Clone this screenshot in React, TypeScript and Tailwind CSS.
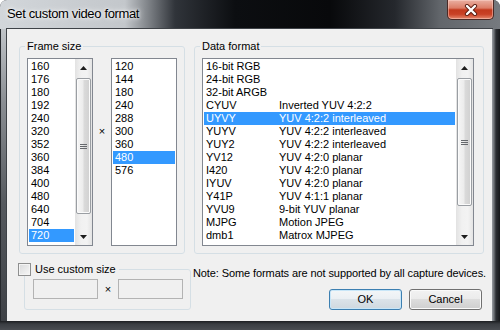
import React from 'react';

const widths = ['160', '176', '180', '192', '240', '320', '352', '360', '384', '400', '480', '640', '704', '720'];
const heights = ['120', '144', '180', '240', '288', '300', '360', '480', '576'];

const formats: [string, string][] = [
  ['16-bit RGB', ''],
  ['24-bit RGB', ''],
  ['32-bit ARGB', ''],
  ['CYUV', 'Inverted YUV 4:2:2'],
  ['UYVY', 'YUV 4:2:2 interleaved'],
  ['YUYV', 'YUV 4:2:2 interleaved'],
  ['YUY2', 'YUV 4:2:2 interleaved'],
  ['YV12', 'YUV 4:2:0 planar'],
  ['I420', 'YUV 4:2:0 planar'],
  ['IYUV', 'YUV 4:2:0 planar'],
  ['Y41P', 'YUV 4:1:1 planar'],
  ['YVU9', '9-bit YUV planar'],
  ['MJPG', 'Motion JPEG'],
  ['dmb1', 'Matrox MJPEG'],
];

const Arrow = ({ down }: { down?: boolean }) => (
  <div className="h-[17px] flex items-center justify-center">
    <svg width="7" height="4" viewBox="0 0 7 4">
      <polygon points={down ? '0,0 7,0 3.5,4' : '0,4 7,4 3.5,0'} fill="#1e1e1e" />
    </svg>
  </div>
);

const ScrollBar = ({ thumb }: { thumb: string }) => (
  <div className="w-[17px] h-full flex flex-col bg-[linear-gradient(to_right,#e2e2e2,#f1f1f1_35%,#f3f3f3_70%,#e4e4e4)]">
    <Arrow />
    <div className="flex-1 px-[1px] pt-[2px]">
      <div
        className={`${thumb} rounded-[2px] border border-[#9a9ea3] bg-[linear-gradient(to_right,#f6f6f6,#ececec_45%,#dadada_55%,#d0d0d0)] shadow-[inset_0_0_0_1px_#fbfbfb] flex flex-col items-center justify-center gap-[1px]`}
      >
        <div className="w-[7px] h-[1px] bg-[#66696d]" />
        <div className="w-[7px] h-[1px] bg-[#66696d]" />
        <div className="w-[7px] h-[1px] bg-[#66696d]" />
      </div>
    </div>
    <Arrow down />
  </div>
);

const Row = ({ selected, children }: { selected?: boolean; children: React.ReactNode }) => (
  <div className={`h-[13px] leading-[13px] pl-[2px] flex whitespace-nowrap ${selected ? 'bg-[#3399ff] text-white' : ''}`}>
    {children}
  </div>
);

const App = () => {
  return (
    <div className="w-[500px] h-[330px] bg-white overflow-hidden font-['Liberation_Sans',Arial,sans-serif] text-[11px] text-black">
      <div className="w-[500px] h-[330px] flex flex-col rounded-t-[7px] overflow-hidden bg-[#2d3035]">
        {/* Title bar */}
        <div className="h-[29px] flex items-start bg-[linear-gradient(to_right,#d2d6da_0px,#c3c7cb_125px,#30343a_175px,#0c0e11_235px,#08090b_330px,#25282d_395px,#62666b_440px,#767a7f_500px)]">
          <span className="pl-[7px] pt-[6px] text-[13px] leading-[16px] tracking-[-0.35px] [text-shadow:0_0_6px_#ffffff,0_0_3px_#ffffff]">
            Set custom video format
          </span>
          <div className="ml-auto mr-[6px] w-[47px] h-[20px] rounded-b-[5px] border border-t-0 border-[#4a2a26] bg-[linear-gradient(to_bottom,#eab0a2_0%,#dc7d67_42%,#c3391d_52%,#c94126_75%,#e5876c_100%)] shadow-[inset_0_0_0_1px_rgba(255,220,210,0.45)] flex items-center justify-center">
            <svg width="14" height="12" viewBox="0 0 14 12">
              <path d="M3 2 L11 10 M11 2 L3 10" stroke="#5b1c10" strokeWidth="4.2" strokeLinecap="round" />
              <path d="M3 2 L11 10 M11 2 L3 10" stroke="#ffffff" strokeWidth="2.4" strokeLinecap="round" />
            </svg>
          </div>
        </div>

        <div className="flex flex-1">
          {/* Left frame */}
          <div className="w-[7px] border-l border-[#25282c] bg-[linear-gradient(to_bottom,#c0c4c8_0%,#8a8e93_25%,#55595e_60%,#3e4146_100%)]" />

          {/* Client area */}
          <div className="w-[485px] h-[292px] bg-[#f0f0f0] shadow-[0_0_0_1px_#3e4247] pl-[11px] pt-[11px] flex flex-col">
            <div className="flex">
              {/* Frame size */}
              <fieldset className="ml-[1px] w-[166px] h-[214px] border border-[#d5dfe5] rounded-[3px] pl-[5px] pt-[5px]">
                <legend className="px-[2px] leading-[13px]">Frame size</legend>
                <div className="flex ml-[2px]">
                  <div className="w-[66px] h-[188px] border border-[#828790] bg-white flex">
                    <div className="flex-1 p-[1px]">
                      {widths.map((w) => (
                        <Row key={w} selected={w === '720'}>{w}</Row>
                      ))}
                    </div>
                    <ScrollBar thumb="h-[136px]" />
                  </div>
                  <div className="w-[18px] text-center mt-[67px] leading-[13px]">×</div>
                  <div className="w-[66px] h-[188px] border border-[#828790] bg-white p-[1px]">
                    {heights.map((h) => (
                      <Row key={h} selected={h === '480'}>{h}</Row>
                    ))}
                  </div>
                </div>
              </fieldset>

              {/* Data format */}
              <fieldset className="ml-[9px] w-[290px] h-[214px] border border-[#d5dfe5] rounded-[3px] pl-[5px] pt-[5px]">
                <legend className="px-[2px] leading-[13px]">Data format</legend>
                <div className="ml-[2px] w-[272px] h-[188px] border border-[#828790] bg-white flex">
                  <div className="flex-1 p-[1px]">
                    {formats.map(([code, desc]) => (
                      <Row key={code} selected={code === 'UYVY'}>
                        <span className="w-[73px]">{code}</span>
                        <span>{desc}</span>
                      </Row>
                    ))}
                  </div>
                  <ScrollBar thumb="h-[128px]" />
                </div>
              </fieldset>
            </div>

            <div className="flex mt-[9px]">
              {/* Custom size */}
              <fieldset className="ml-[6px] w-[167px] h-[47px] border border-[#d5dfe5] rounded-[3px]">
                <legend className="-ml-[7px] pr-[3px] flex items-center gap-[4px] leading-[13px] bg-[#f0f0f0]">
                  <span className="w-[13px] h-[13px] border border-[#8e8f8f] bg-[linear-gradient(135deg,#d9dadb,#f7f7f7)] shadow-[inset_0_0_0_1px_#f4f4f4]" />
                  <span>Use custom size</span>
                </legend>
                <div className="flex items-center mt-[3px] ml-[8px]">
                  <div className="w-[65px] h-[20px] border border-[#b3b3b3] bg-[#f0f0f0]" />
                  <div className="w-[20px] text-center leading-[13px]">×</div>
                  <div className="w-[65px] h-[20px] border border-[#b3b3b3] bg-[#f0f0f0]" />
                </div>
              </fieldset>

              <div className="ml-[2px] flex-1 flex flex-col">
                <div className="mt-[4px] leading-[13px] whitespace-nowrap tracking-[-0.1px]">
                  Note: Some formats are not supported by all capture devices.
                </div>
                <div className="mt-[9px] flex justify-end gap-[7px] pr-[10px]">
                  <button className="w-[73px] h-[21px] rounded-[3px] border border-[#3c7fb1] bg-[linear-gradient(to_bottom,#f3f6f8_0%,#eaeff3_50%,#dbe3e9_50%,#cfd8df_100%)] shadow-[inset_0_0_0_1px_#c8e6f8] leading-[13px]">
                    OK
                  </button>
                  <button className="w-[73px] h-[21px] rounded-[3px] border border-[#707070] bg-[linear-gradient(to_bottom,#f2f2f2_0%,#ebebeb_50%,#dddddd_50%,#cfcfcf_100%)] shadow-[inset_0_0_0_1px_#fafafa] leading-[13px]">
                    Cancel
                  </button>
                </div>
              </div>
            </div>
          </div>

          {/* Right frame */}
          <div className="w-[8px] bg-[linear-gradient(to_right,#9a9ea3_0px,#6b6f74_2px,#2c2f33_4px,#16181b_8px)]" />
        </div>

        {/* Bottom frame */}
        <div className="h-[9px] bg-[linear-gradient(to_bottom,#1c1e21_0px,#3a3d42_3px,#4a4d52_9px)]" />
      </div>
    </div>
  );
};

export default App;
